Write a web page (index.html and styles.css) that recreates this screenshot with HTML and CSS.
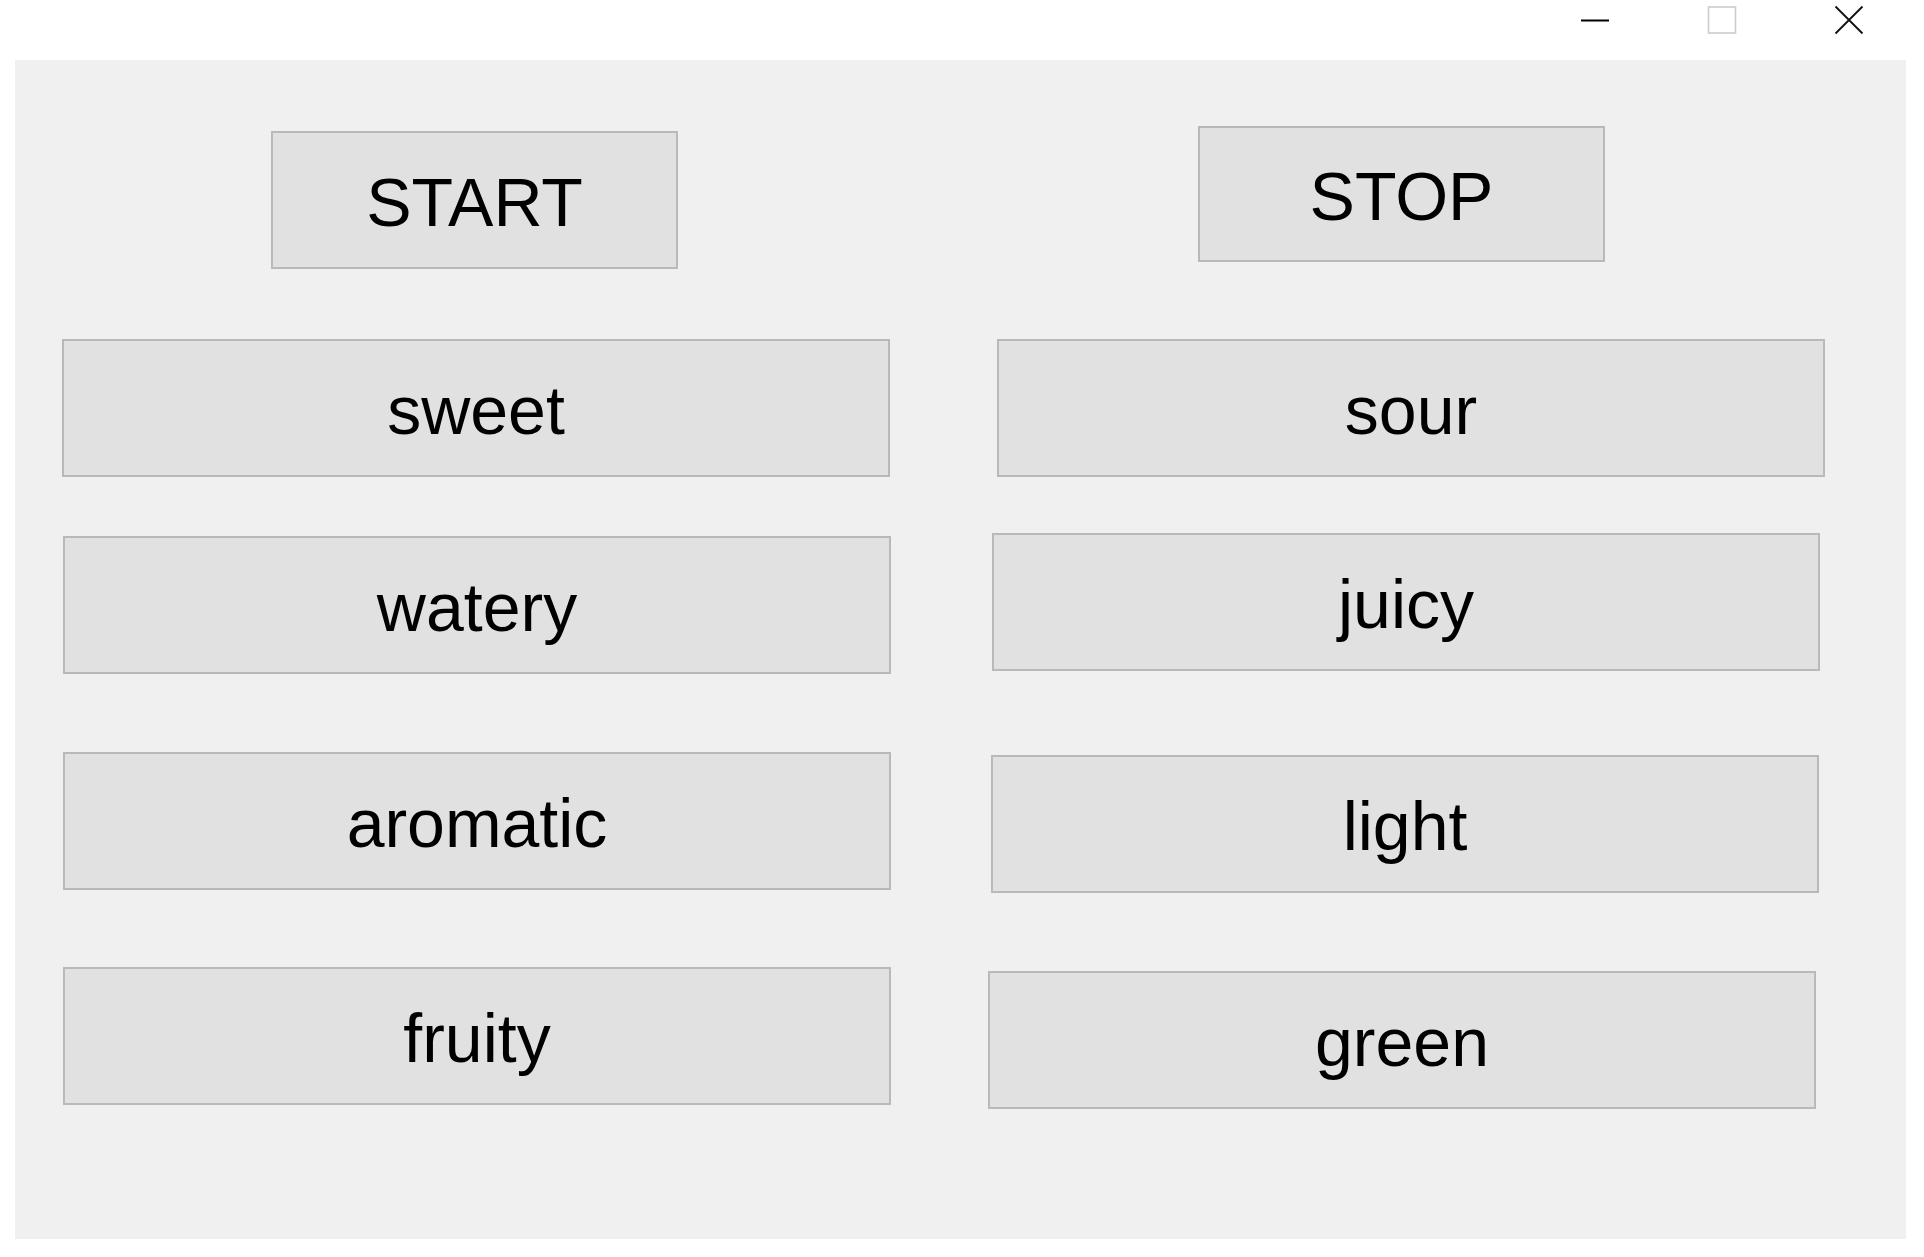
FILE: index.html
```html
<!DOCTYPE html>
<html lang="en">
<head>
<meta charset="utf-8">
<title>Form</title>
<link rel="stylesheet" href="styles.css">
</head>
<body>
<div class="titlebar">
  <div class="caption-btn">
    <svg width="30" height="30" viewBox="0 0 30 30"><line x1="1" y1="20.5" x2="29" y2="20.5" stroke="#000" stroke-width="2"/></svg>
  </div>
  <div class="caption-btn">
    <svg width="30" height="30" viewBox="0 0 30 30"><rect x="1.5" y="7" width="27" height="26" fill="none" stroke="#cccccc" stroke-width="1.6"/></svg>
  </div>
  <div class="caption-btn last">
    <svg width="30" height="30" viewBox="0 0 30 30"><path d="M1.5 6.5 L28.5 33.5 M28.5 6.5 L1.5 33.5" stroke="#111" stroke-width="1.8" fill="none"/></svg>
  </div>
</div>
<div class="panel">
  <div class="row row0">
    <div class="btn small start">START</div>
    <div class="btn small stop">STOP</div>
  </div>
  <div class="row row1">
    <div class="btn wide l47">sweet</div>
    <div class="btn wide ml107">sour</div>
  </div>
  <div class="row row2">
    <div class="btn wide l48 mt3">watery</div>
    <div class="btn wide ml101">juicy</div>
  </div>
  <div class="row row3">
    <div class="btn wide l48">aromatic</div>
    <div class="btn wide ml100 mt3">light</div>
  </div>
  <div class="row row4">
    <div class="btn wide l48">fruity</div>
    <div class="btn wide ml97 mt4">green</div>
  </div>
</div>
</body>
</html>
```
FILE: styles.css
```css
html, body {
  margin: 0;
  padding: 0;
  background: #ffffff;
}
body {
  width: 1924px;
  height: 1257px;
  overflow: hidden;
  font-family: "Liberation Sans", Arial, sans-serif;
}
.titlebar {
  height: 60px;
  display: flex;
  justify-content: flex-end;
  align-items: flex-start;
  padding-right: 60px;
  box-sizing: border-box;
}
.caption-btn {
  width: 30px;
  height: 40px;
  margin-left: 97px;
}
.caption-btn svg {
  display: block;
  overflow: visible;
}
.panel {
  margin-left: 15px;
  width: 1891px;
  height: 1179px;
  background: #f0f0f0;
  box-sizing: border-box;
  padding-top: 66px;
}
.row {
  display: flex;
  align-items: flex-start;
}
.row1 { margin-top: 70px; }
.row2 { margin-top: 56px; }
.row3 { margin-top: 78px; }
.row4 { margin-top: 74px; }
.btn {
  box-sizing: border-box;
  height: 138px;
  background: #e1e1e1;
  border: 2px solid #b9b9b9;
  display: flex;
  align-items: center;
  justify-content: center;
  color: #000;
  font-size: 68px;
  line-height: 1;
  padding-top: 4px;
}
.small { width: 407px; }
.wide { width: 828px; }
.start { margin-left: 256px; margin-top: 5px; }
.stop { margin-left: 520px; height: 136px; }
.l47 { margin-left: 47px; }
.l48 { margin-left: 48px; }
.ml107 { margin-left: 107px; }
.ml101 { margin-left: 101px; }
.ml100 { margin-left: 100px; }
.ml97 { margin-left: 97px; }
.mt3 { margin-top: 3px; }
.mt4 { margin-top: 4px; }
```
